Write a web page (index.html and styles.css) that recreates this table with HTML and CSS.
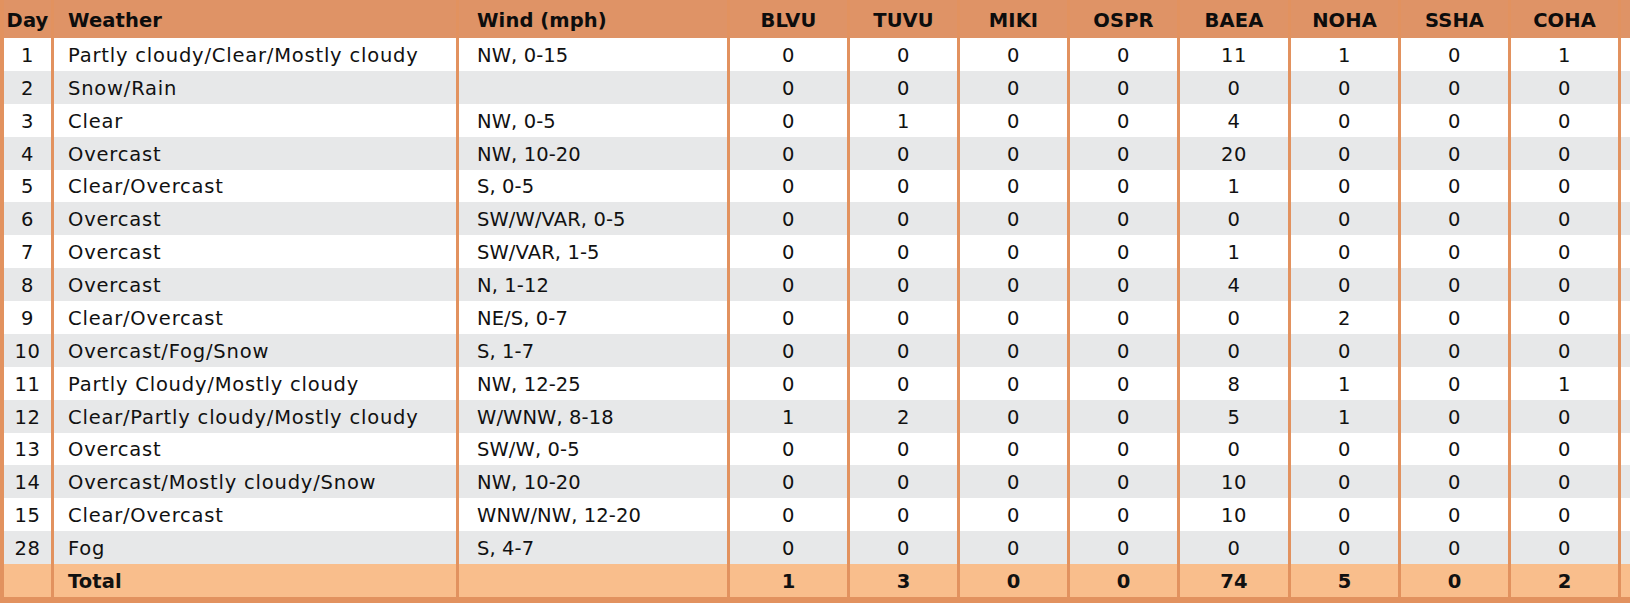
FILE: index.html
```html
<!DOCTYPE html>
<html lang="en">
<head>
<meta charset="utf-8">
<title>Raptor counts</title>
<link rel="stylesheet" href="styles.css">
</head>
<body>
<div class="frame">
<table class="counts">
  <thead>
    <tr class="head">
      <th class="c-day">Day</th>
      <th class="c-weather">Weather</th>
      <th class="c-wind">Wind (mph)</th>
      <th class="c-num c-blvu">BLVU</th>
      <th class="c-num">TUVU</th>
      <th class="c-num">MIKI</th>
      <th class="c-num">OSPR</th>
      <th class="c-num c-baea">BAEA</th>
      <th class="c-num">NOHA</th>
      <th class="c-num">SSHA</th>
      <th class="c-num">COHA</th>
      <th class="c-extra"></th>
    </tr>
  </thead>
  <tbody>
    <tr><td class="day">1</td><td class="txt">Partly cloudy/Clear/Mostly cloudy</td><td class="wind">NW, 0-15</td><td>0</td><td>0</td><td>0</td><td>0</td><td>11</td><td>1</td><td>0</td><td>1</td><td></td></tr>
    <tr><td class="day">2</td><td class="txt">Snow/Rain</td><td class="wind"></td><td>0</td><td>0</td><td>0</td><td>0</td><td>0</td><td>0</td><td>0</td><td>0</td><td></td></tr>
    <tr><td class="day">3</td><td class="txt">Clear</td><td class="wind">NW, 0-5</td><td>0</td><td>1</td><td>0</td><td>0</td><td>4</td><td>0</td><td>0</td><td>0</td><td></td></tr>
    <tr><td class="day">4</td><td class="txt">Overcast</td><td class="wind">NW, 10-20</td><td>0</td><td>0</td><td>0</td><td>0</td><td>20</td><td>0</td><td>0</td><td>0</td><td></td></tr>
    <tr><td class="day">5</td><td class="txt">Clear/Overcast</td><td class="wind">S, 0-5</td><td>0</td><td>0</td><td>0</td><td>0</td><td>1</td><td>0</td><td>0</td><td>0</td><td></td></tr>
    <tr><td class="day">6</td><td class="txt">Overcast</td><td class="wind">SW/W/VAR, 0-5</td><td>0</td><td>0</td><td>0</td><td>0</td><td>0</td><td>0</td><td>0</td><td>0</td><td></td></tr>
    <tr><td class="day">7</td><td class="txt">Overcast</td><td class="wind">SW/VAR, 1-5</td><td>0</td><td>0</td><td>0</td><td>0</td><td>1</td><td>0</td><td>0</td><td>0</td><td></td></tr>
    <tr><td class="day">8</td><td class="txt">Overcast</td><td class="wind">N, 1-12</td><td>0</td><td>0</td><td>0</td><td>0</td><td>4</td><td>0</td><td>0</td><td>0</td><td></td></tr>
    <tr><td class="day">9</td><td class="txt">Clear/Overcast</td><td class="wind">NE/S, 0-7</td><td>0</td><td>0</td><td>0</td><td>0</td><td>0</td><td>2</td><td>0</td><td>0</td><td></td></tr>
    <tr><td class="day">10</td><td class="txt">Overcast/Fog/Snow</td><td class="wind">S, 1-7</td><td>0</td><td>0</td><td>0</td><td>0</td><td>0</td><td>0</td><td>0</td><td>0</td><td></td></tr>
    <tr><td class="day">11</td><td class="txt">Partly Cloudy/Mostly cloudy</td><td class="wind">NW, 12-25</td><td>0</td><td>0</td><td>0</td><td>0</td><td>8</td><td>1</td><td>0</td><td>1</td><td></td></tr>
    <tr><td class="day">12</td><td class="txt">Clear/Partly cloudy/Mostly cloudy</td><td class="wind">W/WNW, 8-18</td><td>1</td><td>2</td><td>0</td><td>0</td><td>5</td><td>1</td><td>0</td><td>0</td><td></td></tr>
    <tr><td class="day">13</td><td class="txt">Overcast</td><td class="wind">SW/W, 0-5</td><td>0</td><td>0</td><td>0</td><td>0</td><td>0</td><td>0</td><td>0</td><td>0</td><td></td></tr>
    <tr><td class="day">14</td><td class="txt">Overcast/Mostly cloudy/Snow</td><td class="wind">NW, 10-20</td><td>0</td><td>0</td><td>0</td><td>0</td><td>10</td><td>0</td><td>0</td><td>0</td><td></td></tr>
    <tr><td class="day">15</td><td class="txt">Clear/Overcast</td><td class="wind">WNW/NW, 12-20</td><td>0</td><td>0</td><td>0</td><td>0</td><td>10</td><td>0</td><td>0</td><td>0</td><td></td></tr>
    <tr><td class="day">28</td><td class="txt">Fog</td><td class="wind">S, 4-7</td><td>0</td><td>0</td><td>0</td><td>0</td><td>0</td><td>0</td><td>0</td><td>0</td><td></td></tr>
  </tbody>
  <tfoot>
    <tr class="total"><td class="day"></td><td class="txt">Total</td><td class="wind"></td><td>1</td><td>3</td><td>0</td><td>0</td><td>74</td><td>5</td><td>0</td><td>2</td><td></td></tr>
  </tfoot>
</table>
</div>
</body>
</html>
```

FILE: styles.css
```css
html, body {
  margin: 0;
  padding: 0;
  background: #ffffff;
  overflow: hidden;
}

.frame {
  width: 1630px;
  height: 603px;
  overflow: hidden;
}

.counts {
  border-collapse: separate;
  border-spacing: 0;
  table-layout: fixed;
  width: 1718px;
  font-family: "DejaVu Sans", "Liberation Sans", sans-serif;
  font-size: 19.5px;
  letter-spacing: 0.6px;
  color: #111111;
  border-bottom: 6px solid #e2925f;
}

.counts th,
.counts td {
  box-sizing: border-box;
  border-left: 3px solid #e2925f;
  padding: 2px 0 0 0;
  text-align: center;
  white-space: nowrap;
  overflow: hidden;
}

.counts .c-day,
.counts td.day {
  border-left-width: 4px;
}

.c-day { width: 51px; }
.c-weather { width: 405px; }
.c-wind { width: 271px; }
.c-num { width: 110px; }
.c-blvu { width: 120px; }
.c-baea { width: 111px; }
.c-extra { width: 100px; }

.head th {
  background: #df9366;
  height: 38px;
  font-weight: bold;
  letter-spacing: 0.1px;
  color: #0d0d0d;
}

.head .c-weather {
  text-align: left;
  padding-left: 14px;
}

.head .c-wind {
  text-align: left;
  padding-left: 18px;
}

.counts td.txt {
  text-align: left;
  padding-left: 14px;
  letter-spacing: 0.8px;
}

.counts td.wind {
  text-align: left;
  padding-left: 18px;
  letter-spacing: 0.1px;
}

tbody tr {
  height: 32.875px;
  background: #ffffff;
}

tbody tr:nth-child(even) {
  background: #e7e8e9;
}

.total {
  height: 33px;
  background: #f9be8c;
  font-weight: bold;
}

.total td,
.total td.txt {
  letter-spacing: 0.1px;
}
```
